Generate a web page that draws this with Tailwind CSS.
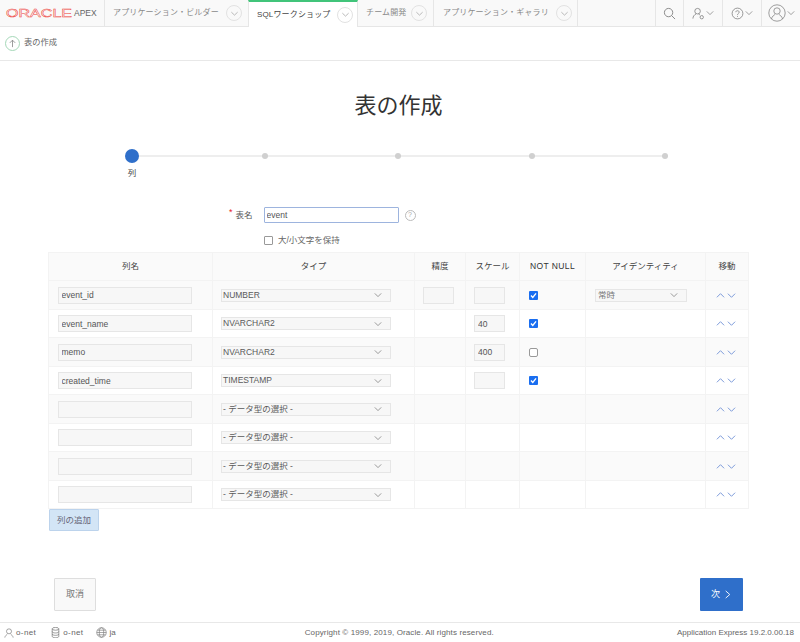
<!DOCTYPE html>
<html lang="ja">
<head>
<meta charset="UTF-8">
<title>表の作成</title>
<script src="https://cdn.jsdelivr.net/npm/@tailwindcss/browser@4"></script>
</head>
<body class="h-[642px] w-[800px] overflow-hidden bg-white text-[#5a5a5a] font-['Liberation_Sans','Noto_Sans_CJK_JP',sans-serif] text-[9px]">

<!-- top nav -->
<header class="flex h-[27px] border-b border-[#e6e6e6] bg-[#f9f9f9]">
  <div class="flex w-[104px] items-center pl-[6px]">
    <span class="w-[65px] origin-left scale-x-[1.46] text-[11px] leading-none text-transparent [-webkit-text-stroke:0.4px_#ee3a34]">ORACLE</span>
    <span class="ml-[3px] text-[8.5px] text-[#666]">APEX</span>
  </div>
  <nav class="flex text-[8px]">
    <div class="flex w-[144px] items-center border-l border-[#e6e6e6] pl-[8px] tracking-[0.15px] text-[#8a8a8a]">
      <span class="w-[108px] whitespace-nowrap">アプリケーション・ビルダー</span>
      <span class="ml-[5px] flex size-[16px] items-center justify-center rounded-full border border-[#e2e2e2]">
        <svg class="size-[9px]" viewBox="0 0 10 10" fill="none" stroke="#aaa" stroke-width="0.9"><path d="M1.5 3.5 5 6.8l3.5-3.3"/></svg>
      </span>
    </div>
    <div class="flex w-[110px] items-center border-x border-t-2 border-x-[#e6e6e6] border-t-[#41c47a] -mb-px bg-white pl-[8px] tracking-[0.15px] text-[#444]">
      <span class="w-[75px] whitespace-nowrap">SQLワークショップ</span>
      <span class="ml-[5px] flex size-[16px] items-center justify-center rounded-full border border-[#e2e2e2]">
        <svg class="size-[9px]" viewBox="0 0 10 10" fill="none" stroke="#aaa" stroke-width="0.9"><path d="M1.5 3.5 5 6.8l3.5-3.3"/></svg>
      </span>
    </div>
    <div class="flex w-[76px] items-center border-r border-[#e6e6e6] pl-[8px] tracking-[0.15px] text-[#8a8a8a]">
      <span class="w-[41px] whitespace-nowrap">チーム開発</span>
      <span class="ml-[4px] flex size-[16px] items-center justify-center rounded-full border border-[#e2e2e2]">
        <svg class="size-[9px]" viewBox="0 0 10 10" fill="none" stroke="#aaa" stroke-width="0.9"><path d="M1.5 3.5 5 6.8l3.5-3.3"/></svg>
      </span>
    </div>
    <div class="flex w-[144px] items-center border-r border-[#e6e6e6] pl-[9px] tracking-[0.15px] text-[#8a8a8a]">
      <span class="w-[108px] whitespace-nowrap">アプリケーション・ギャラリ</span>
      <span class="ml-[5px] flex size-[16px] items-center justify-center rounded-full border border-[#e2e2e2]">
        <svg class="size-[9px]" viewBox="0 0 10 10" fill="none" stroke="#aaa" stroke-width="0.9"><path d="M1.5 3.5 5 6.8l3.5-3.3"/></svg>
      </span>
    </div>
  </nav>
  <div class="ml-auto flex">
    <div class="flex w-[28px] items-center justify-center border-l border-[#e6e6e6]">
      <svg class="size-[13px]" viewBox="0 0 14 14" fill="none" stroke="#777" stroke-width="0.9"><circle cx="6" cy="6" r="4.5"/><path d="m9.3 9.3 3.7 3.7"/></svg>
    </div>
    <div class="flex w-[39px] items-center justify-center gap-[1px] border-l border-[#e6e6e6]">
      <svg class="size-[13px]" viewBox="0 0 14 14" fill="none" stroke="#777" stroke-width="0.8"><circle cx="6" cy="4.5" r="3"/><path d="M1 12.5c0-2.5 1.500-4 3.300-5M8.500 8.500 7 7.600"/><circle cx="10.500" cy="11" r="1.800"/></svg>
      <svg class="size-[8px]" viewBox="0 0 10 10" fill="none" stroke="#888" stroke-width="1"><path d="M1 3 5 7l4-4"/></svg>
    </div>
    <div class="flex w-[39px] items-center justify-center gap-[1px] border-l border-[#e6e6e6]">
      <svg class="size-[13px]" viewBox="0 0 14 14" fill="none" stroke="#777" stroke-width="0.8"><circle cx="7" cy="7" r="5.800"/><path d="M5.200 5.600C5.200 4.500 6 4 7 4s1.800.6 1.800 1.600C8.800 7 7 7 7 8.500M7 9.600v1"/></svg>
      <svg class="size-[8px]" viewBox="0 0 10 10" fill="none" stroke="#888" stroke-width="1"><path d="M1 3 5 7l4-4"/></svg>
    </div>
    <div class="flex w-[39px] items-center justify-center gap-[1px] border-l border-[#e6e6e6]">
      <svg class="size-[18px]" viewBox="0 0 18 18" fill="none" stroke="#777" stroke-width="0.7"><circle cx="9" cy="9" r="8.200"/><circle cx="9" cy="7" r="3.200"/><path d="M3.500 15c.5-3 2.500-3.500 3.700-4.800M14.500 15c-.5-3-2.500-3.500-3.700-4.800"/></svg>
      <svg class="size-[8px]" viewBox="0 0 10 10" fill="none" stroke="#888" stroke-width="1"><path d="M1 3 5 7l4-4"/></svg>
    </div>
  </div>
</header>

<!-- breadcrumb bar -->
<div class="flex h-[34px] items-center gap-[4px] border-b border-[#e8e8e8] pl-[5px]">
  <span class="flex size-[15px] items-center justify-center rounded-full border border-[#a5d8b8]">
    <svg class="size-[9px]" viewBox="0 0 10 10" fill="none" stroke="#777" stroke-width="0.8"><path d="M5 9V1.500M2 4.300l3-3 3 3"/></svg>
  </span>
  <span class="text-[8.25px] text-[#666]">表の作成</span>
</div>

<main>
  <h1 class="mr-[3px] pt-[30px] text-center text-[22px] leading-[30px] text-[#333]">表の作成</h1>

  <!-- wizard steps -->
  <div class="relative mt-[28px] ml-[125px] h-[34px] w-[547px]">
    <div class="absolute top-[6px] right-[4px] left-[7px] h-[2px] bg-[#eeeeee]"></div>
    <div class="relative flex items-start">
      <div class="flex w-[14px] flex-col items-center">
        <span class="size-[14px] rounded-full bg-[#2f6fca]"></span>
        <span class="mt-[4px] text-[8.5px] text-[#444]">列</span>
      </div>
      <span class="mt-[4px] ml-[123px] size-[6px] rounded-full bg-[#d0d0d0]"></span>
      <span class="mt-[4px] ml-[127px] size-[6px] rounded-full bg-[#d0d0d0]"></span>
      <span class="mt-[4px] ml-[128px] size-[6px] rounded-full bg-[#d0d0d0]"></span>
      <span class="mt-[4px] ml-[127px] size-[6px] rounded-full bg-[#d0d0d0]"></span>
    </div>
  </div>

  <!-- table name -->
  <div class="mt-[24px] flex h-[16px] items-center pl-[229px]">
    <span class="mb-[5px] text-[9px] leading-none text-[#e8211c]">*</span>
    <span class="ml-[3px] w-[28px] text-[8.5px]">表名</span>
    <input value="event" class="h-[16px] w-[135px] rounded-[1px] border border-[#9db4de] bg-white px-[2px] text-[8.5px] text-[#555] outline-none">
    <span class="ml-[6px] flex size-[11px] items-center justify-center rounded-full border border-[#bbb] text-[7px] text-[#aaa]">?</span>
  </div>
  <label class="mt-[12px] flex h-[10px] items-center pl-[264px] text-[8.5px] text-[#666]">
    <span class="size-[9px] rounded-[1px] border border-[#999] bg-white"></span>
    <span class="ml-[5px]">大/小文字を保持</span>
  </label>

  <!-- columns table -->
  <table class="mt-[7px] ml-[48px] w-[700px] table-fixed border-collapse text-[8.5px]">
    <colgroup>
      <col class="w-[164px]"><col class="w-[202px]"><col class="w-[51px]"><col class="w-[54px]"><col class="w-[66px]"><col class="w-[120px]"><col class="w-[43px]">
    </colgroup>
    <thead>
      <tr class="h-[28px] bg-[#fafafa] text-[#444] [&>th]:border [&>th]:border-[#f3f3f3] [&>th]:font-normal">
        <th>列名</th><th>タイプ</th><th>精度</th><th>スケール</th><th class="tracking-[0.4px] text-[#333]">NOT NULL</th><th>アイデンティティ</th><th>移動</th>
      </tr>
    </thead>
    <tbody class="[&_td]:border [&_td]:border-[#f3f3f3] [&_tr:nth-child(odd)]:h-[29px] [&_tr:nth-child(even)]:h-[28px]">
      <tr class="bg-[#fafafa]">
        <td class="pl-[9px]"><input value="event_id" class="h-[17px] w-[134px] border border-[#e6e6e6] bg-[#f7f7f7] px-[2.5px] text-[#555]"></td>
        <td class="pl-[8px]"><div class="flex h-[13px] w-[170px] items-center justify-between border border-[#e6e6e6] bg-[#f7f7f7] pr-[8px] pl-[1px]">NUMBER<svg class="size-[8px]" viewBox="0 0 10 10" fill="none" stroke="#777" stroke-width="0.9"><path d="M1 3 5 7l4-4"/></svg></div></td>
        <td class="pl-[8px]"><input class="h-[17px] w-[31px] border border-[#e6e6e6] bg-[#f7f7f7]"></td>
        <td class="pl-[8px]"><input class="h-[17px] w-[31px] border border-[#e6e6e6] bg-[#f7f7f7]"></td>
        <td class="pl-[9px]"><span class="flex size-[9px] items-center justify-center rounded-[1px] bg-[#1a6ef0]"><svg class="size-[9px]" viewBox="0 0 10 10" fill="none" stroke="#fff" stroke-width="1.500"><path d="m2.200 5 2 2.200 3.600-4.600"/></svg></span></td>
        <td class="pl-[9px]"><div class="flex h-[13px] w-[92px] items-center justify-between border border-[#e6e6e6] bg-[#f7f7f7] pr-[8px] pl-[2px] text-[#777]">常時<svg class="size-[8px]" viewBox="0 0 10 10" fill="none" stroke="#777" stroke-width="0.9"><path d="M1 3 5 7l4-4"/></svg></div></td>
        <td class="pl-[10px]"><div class="flex gap-[2px]"><svg class="size-[9px]" viewBox="0 0 10 10" fill="none" stroke="#6f91d6" stroke-width="1"><path d="M1 7 5 3l4 4"/></svg><svg class="size-[9px]" viewBox="0 0 10 10" fill="none" stroke="#6f91d6" stroke-width="1"><path d="M1 3 5 7l4-4"/></svg></div></td>
      </tr>
      <tr>
        <td class="pl-[9px]"><input value="event_name" class="h-[17px] w-[134px] border border-[#e6e6e6] bg-[#f7f7f7] px-[2.5px] text-[#555]"></td>
        <td class="pl-[8px]"><div class="flex h-[13px] w-[170px] items-center justify-between border border-[#e6e6e6] bg-[#f7f7f7] pr-[8px] pl-[1px]">NVARCHAR2<svg class="size-[8px]" viewBox="0 0 10 10" fill="none" stroke="#777" stroke-width="0.9"><path d="M1 3 5 7l4-4"/></svg></div></td>
        <td></td>
        <td class="pl-[8px]"><input value="40" class="h-[17px] w-[31px] border border-[#e6e6e6] bg-[#f7f7f7] px-[3px] text-[#555]"></td>
        <td class="pl-[9px]"><span class="flex size-[9px] items-center justify-center rounded-[1px] bg-[#1a6ef0]"><svg class="size-[9px]" viewBox="0 0 10 10" fill="none" stroke="#fff" stroke-width="1.500"><path d="m2.200 5 2 2.200 3.600-4.600"/></svg></span></td>
        <td></td>
        <td class="pl-[10px]"><div class="flex gap-[2px]"><svg class="size-[9px]" viewBox="0 0 10 10" fill="none" stroke="#6f91d6" stroke-width="1"><path d="M1 7 5 3l4 4"/></svg><svg class="size-[9px]" viewBox="0 0 10 10" fill="none" stroke="#6f91d6" stroke-width="1"><path d="M1 3 5 7l4-4"/></svg></div></td>
      </tr>
      <tr class="bg-[#fafafa]">
        <td class="pl-[9px]"><input value="memo" class="h-[17px] w-[134px] border border-[#e6e6e6] bg-[#f7f7f7] px-[2.5px] text-[#555]"></td>
        <td class="pl-[8px]"><div class="flex h-[13px] w-[170px] items-center justify-between border border-[#e6e6e6] bg-[#f7f7f7] pr-[8px] pl-[1px]">NVARCHAR2<svg class="size-[8px]" viewBox="0 0 10 10" fill="none" stroke="#777" stroke-width="0.9"><path d="M1 3 5 7l4-4"/></svg></div></td>
        <td></td>
        <td class="pl-[8px]"><input value="400" class="h-[17px] w-[31px] border border-[#e6e6e6] bg-[#f7f7f7] px-[3px] text-[#555]"></td>
        <td class="pl-[9px]"><span class="block size-[9px] rounded-[2px] border border-[#999] bg-white"></span></td>
        <td></td>
        <td class="pl-[10px]"><div class="flex gap-[2px]"><svg class="size-[9px]" viewBox="0 0 10 10" fill="none" stroke="#6f91d6" stroke-width="1"><path d="M1 7 5 3l4 4"/></svg><svg class="size-[9px]" viewBox="0 0 10 10" fill="none" stroke="#6f91d6" stroke-width="1"><path d="M1 3 5 7l4-4"/></svg></div></td>
      </tr>
      <tr>
        <td class="pl-[9px]"><input value="created_time" class="h-[17px] w-[134px] border border-[#e6e6e6] bg-[#f7f7f7] px-[2.5px] text-[#555]"></td>
        <td class="pl-[8px]"><div class="flex h-[13px] w-[170px] items-center justify-between border border-[#e6e6e6] bg-[#f7f7f7] pr-[8px] pl-[1px]">TIMESTAMP<svg class="size-[8px]" viewBox="0 0 10 10" fill="none" stroke="#777" stroke-width="0.9"><path d="M1 3 5 7l4-4"/></svg></div></td>
        <td></td>
        <td class="pl-[8px]"><input class="h-[17px] w-[31px] border border-[#e6e6e6] bg-[#f7f7f7]"></td>
        <td class="pl-[9px]"><span class="flex size-[9px] items-center justify-center rounded-[1px] bg-[#1a6ef0]"><svg class="size-[9px]" viewBox="0 0 10 10" fill="none" stroke="#fff" stroke-width="1.500"><path d="m2.200 5 2 2.200 3.600-4.600"/></svg></span></td>
        <td></td>
        <td class="pl-[10px]"><div class="flex gap-[2px]"><svg class="size-[9px]" viewBox="0 0 10 10" fill="none" stroke="#6f91d6" stroke-width="1"><path d="M1 7 5 3l4 4"/></svg><svg class="size-[9px]" viewBox="0 0 10 10" fill="none" stroke="#6f91d6" stroke-width="1"><path d="M1 3 5 7l4-4"/></svg></div></td>
      </tr>
      <tr class="bg-[#fafafa]">
        <td class="pl-[9px]"><input class="h-[17px] w-[134px] border border-[#e6e6e6] bg-[#f7f7f7]"></td>
        <td class="pl-[8px]"><div class="flex h-[13px] w-[170px] items-center justify-between border border-[#e6e6e6] bg-[#f7f7f7] pr-[8px] pl-[1px]">- データ型の選択 -<svg class="size-[8px]" viewBox="0 0 10 10" fill="none" stroke="#777" stroke-width="0.9"><path d="M1 3 5 7l4-4"/></svg></div></td>
        <td></td><td></td><td></td><td></td>
        <td class="pl-[10px]"><div class="flex gap-[2px]"><svg class="size-[9px]" viewBox="0 0 10 10" fill="none" stroke="#6f91d6" stroke-width="1"><path d="M1 7 5 3l4 4"/></svg><svg class="size-[9px]" viewBox="0 0 10 10" fill="none" stroke="#6f91d6" stroke-width="1"><path d="M1 3 5 7l4-4"/></svg></div></td>
      </tr>
      <tr>
        <td class="pl-[9px]"><input class="h-[17px] w-[134px] border border-[#e6e6e6] bg-[#f7f7f7]"></td>
        <td class="pl-[8px]"><div class="flex h-[13px] w-[170px] items-center justify-between border border-[#e6e6e6] bg-[#f7f7f7] pr-[8px] pl-[1px]">- データ型の選択 -<svg class="size-[8px]" viewBox="0 0 10 10" fill="none" stroke="#777" stroke-width="0.9"><path d="M1 3 5 7l4-4"/></svg></div></td>
        <td></td><td></td><td></td><td></td>
        <td class="pl-[10px]"><div class="flex gap-[2px]"><svg class="size-[9px]" viewBox="0 0 10 10" fill="none" stroke="#6f91d6" stroke-width="1"><path d="M1 7 5 3l4 4"/></svg><svg class="size-[9px]" viewBox="0 0 10 10" fill="none" stroke="#6f91d6" stroke-width="1"><path d="M1 3 5 7l4-4"/></svg></div></td>
      </tr>
      <tr class="bg-[#fafafa]">
        <td class="pl-[9px]"><input class="h-[17px] w-[134px] border border-[#e6e6e6] bg-[#f7f7f7]"></td>
        <td class="pl-[8px]"><div class="flex h-[13px] w-[170px] items-center justify-between border border-[#e6e6e6] bg-[#f7f7f7] pr-[8px] pl-[1px]">- データ型の選択 -<svg class="size-[8px]" viewBox="0 0 10 10" fill="none" stroke="#777" stroke-width="0.9"><path d="M1 3 5 7l4-4"/></svg></div></td>
        <td></td><td></td><td></td><td></td>
        <td class="pl-[10px]"><div class="flex gap-[2px]"><svg class="size-[9px]" viewBox="0 0 10 10" fill="none" stroke="#6f91d6" stroke-width="1"><path d="M1 7 5 3l4 4"/></svg><svg class="size-[9px]" viewBox="0 0 10 10" fill="none" stroke="#6f91d6" stroke-width="1"><path d="M1 3 5 7l4-4"/></svg></div></td>
      </tr>
      <tr>
        <td class="pl-[9px]"><input class="h-[17px] w-[134px] border border-[#e6e6e6] bg-[#f7f7f7]"></td>
        <td class="pl-[8px]"><div class="flex h-[13px] w-[170px] items-center justify-between border border-[#e6e6e6] bg-[#f7f7f7] pr-[8px] pl-[1px]">- データ型の選択 -<svg class="size-[8px]" viewBox="0 0 10 10" fill="none" stroke="#777" stroke-width="0.9"><path d="M1 3 5 7l4-4"/></svg></div></td>
        <td></td><td></td><td></td><td></td>
        <td class="pl-[10px]"><div class="flex gap-[2px]"><svg class="size-[9px]" viewBox="0 0 10 10" fill="none" stroke="#6f91d6" stroke-width="1"><path d="M1 7 5 3l4 4"/></svg><svg class="size-[9px]" viewBox="0 0 10 10" fill="none" stroke="#6f91d6" stroke-width="1"><path d="M1 3 5 7l4-4"/></svg></div></td>
      </tr>
    </tbody>
  </table>

  <button class="ml-[49px] flex h-[22px] w-[50px] items-center justify-center rounded-[1px] border border-[#bcd3ec] bg-[#d3e5f6] text-[8.5px] text-[#667]">列の追加</button>

  <div class="mt-[47px] flex items-center justify-between pr-[57px] pl-[54px]">
    <button class="h-[33px] w-[42px] rounded-[1px] border border-[#dedede] bg-[#f9f9f9] text-[9px] text-[#777]">取消</button>
    <button class="flex h-[33px] w-[43px] items-center justify-center gap-[3px] rounded-[1px] bg-[#2f6fca] text-[9px] text-white">次<svg class="size-[9px]" viewBox="0 0 10 10" fill="none" stroke="#fff" stroke-width="1"><path d="m3 1 4.500 4L3 9"/></svg></button>
  </div>
</main>

<!-- footer -->
<footer class="mt-[11px] flex h-[20px] items-center border-t border-[#e8e8e8] pl-[4px] text-[8px] text-[#666]">
  <svg class="size-[10px]" viewBox="0 0 12 12" fill="none" stroke="#777" stroke-width="0.8"><circle cx="6" cy="4" r="3"/><path d="M1 11.500c.4-2.500 2-3 3-4.200M11 11.500c-.4-2.500-2-3-3-4.200"/></svg>
  <span class="ml-[2px] tracking-[0.4px]">o-net</span>
  <svg class="ml-[14px] size-[11px]" viewBox="0 0 12 12" fill="none" stroke="#777" stroke-width="0.8"><ellipse cx="6" cy="2" rx="3.600" ry="1.500"/><path d="M2.400 2v8.200c0 .9 1.600 1.500 3.600 1.500s3.600-.6 3.600-1.500V2M2.400 5c0 .9 1.600 1.500 3.600 1.500S9.600 5.900 9.600 5M2.400 7.600c0 .9 1.600 1.500 3.600 1.500s3.600-.6 3.600-1.500"/></svg>
  <span class="ml-[2px] tracking-[0.4px]">o-net</span>
  <svg class="ml-[13px] size-[11px]" viewBox="0 0 12 12" fill="none" stroke="#777" stroke-width="0.7"><circle cx="6" cy="6" r="5.200"/><ellipse cx="6" cy="6" rx="2.400" ry="5.200"/><path d="M.8 6h10.400M1.500 3.500h9M1.500 8.500h9"/></svg>
  <span class="ml-[2px]">ja</span>
  <span class="ml-[189px] tracking-[0.12px]">Copyright © 1999, 2019, Oracle. All rights reserved.</span>
  <span class="mr-[6px] ml-auto">Application Express 19.2.0.00.18</span>
</footer>
</body>
</html>
